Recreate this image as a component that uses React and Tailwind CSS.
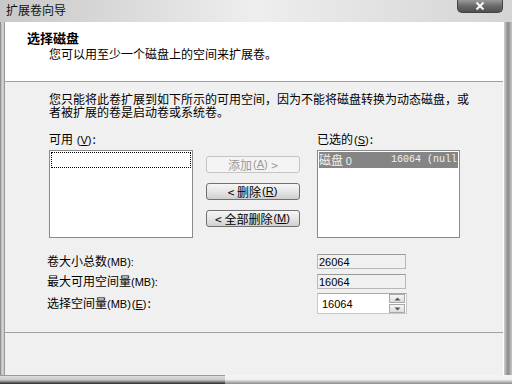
import React from 'react';

const cjk = "font-['Noto_Sans_CJK_SC',sans-serif]";
const num = "font-['Liberation_Sans',sans-serif]";
const mono = "font-['Liberation_Mono',monospace]";

function Btn({ children, disabled }) {
    return (
        <div
            className={`h-[17px] w-[94px] rounded-[3px] border flex items-center justify-center text-[12px] leading-none ${
                disabled
                    ? 'border-[#c4c4c4] bg-[#f4f4f4] text-[#9a9a9a]'
                    : 'border-[#707070] bg-linear-to-b from-[#f6f6f6] via-[#e6e6e6] to-[#cfcfcf] text-black'
            }`}
        >
            {children}
        </div>
    );
}

function Acc({ k }) {
    return (
        <span className={`${num} text-[11px] mx-[1px]`}>
            (<span className="underline">{k}</span>)
        </span>
    );
}

function ReadField({ value }) {
    return (
        <div className={`w-[89px] h-[15px] bg-[#f0f0f0] border border-[#b8b8b8] border-t-[#9a9a9a] flex items-center pl-[1px] ${num} text-[11px] text-black`}>
            {value}
        </div>
    );
}

export default function App() {
    return (
        <div className={`w-[512px] h-[384px] flex flex-col overflow-hidden bg-[#d0d0d0] ${cjk} text-black`}>
            {/* title bar */}
            <div className="h-[22px] flex items-start bg-linear-to-r from-[#c8c8c8] via-[#eeeeee] to-[#d4d4d4]">
                <span className="pl-[6px] pt-[2px] text-[12px] leading-[16px] text-[#111]">扩展卷向导</span>
                <div className="ml-auto mr-[9px] w-[46px] h-[13px] rounded-b-[5px] border border-t-0 border-[#444] bg-linear-to-b from-[#9a9a9a] via-[#6a6a6a] to-[#505050] flex items-center justify-center">
                    <svg width="10" height="8" viewBox="0 0 10 8">
                        <path d="M1.5 0.5 L8.5 7.5 M8.5 0.5 L1.5 7.5" stroke="#fff" strokeWidth="2" />
                    </svg>
                </div>
            </div>

            <div className="flex flex-1">
                <div className="w-[5px] bg-linear-to-r from-[#7a7a7a] via-[#d8d8d8] to-[#c4c4c4] border-r border-[#9a9a9a]" />

                <div className="flex-1 flex flex-col bg-[#f0f0f0]">
                    {/* header */}
                    <div className="h-[60px] bg-white border-b border-[#a0a0a0] pl-[22px] pt-[8px]">
                        <div className="text-[13px] font-bold leading-[16px]">选择磁盘</div>
                        <div className="pl-[22px] mt-[1px] text-[12px] leading-[14px]">您可以用至少一个磁盘上的空间来扩展卷。</div>
                    </div>

                    {/* body */}
                    <div className="flex-1 flex flex-col pt-[10px]">
                        <p className="ml-[44px] w-[424px] text-[12px] leading-[13px]">
                            您只能将此卷扩展到如下所示的可用空间，因为不能将磁盘转换为动态磁盘，或者被扩展的卷是启动卷或系统卷。
                        </p>

                        <div className="flex mt-[14px] text-[12px] leading-[14px]">
                            <span className="ml-[44px] w-[268px]">
                                可用 <Acc k="V" />:
                            </span>
                            <span>
                                已选的<Acc k="S" />:
                            </span>
                        </div>

                        <div className="flex mt-[3px]">
                            <div className="ml-[44px] w-[144px] h-[88px] bg-white border border-[#8a8a8a] p-[1px]">
                                <div className="h-[16px] border border-dotted border-black" />
                            </div>
                            <div className="ml-[13px] w-[94px] pt-[6px] flex flex-col gap-[10px]">
                                <Btn disabled>
                                    添加<Acc k="A" />&nbsp;&gt;
                                </Btn>
                                <Btn>
                                    &lt;&nbsp;删除<Acc k="R" />
                                </Btn>
                                <Btn>
                                    &lt;&nbsp;全部删除<Acc k="M" />
                                </Btn>
                            </div>
                            <div className="ml-[17px] w-[143px] h-[88px] bg-white border border-[#8a8a8a] p-[1px]">
                                <div className="h-[16px] bg-[#858585] text-[#f2f2f2] flex items-center whitespace-nowrap text-[12px] leading-none">
                                    <span className="w-[72px] shrink-0">
                                        磁盘 <span className={`${num} text-[11px]`}>0</span>
                                    </span>
                                    <span className={`${mono} text-[10px]`}>16064 (null</span>
                                </div>
                            </div>
                        </div>

                        <div className="flex flex-col mt-[16px] text-[12px] leading-[14px]">
                            <div className="flex items-center">
                                <span className="ml-[42px] w-[270px]">
                                    卷大小总数<span className={`${num} text-[11px]`}>(MB):</span>
                                </span>
                                <ReadField value="26064" />
                            </div>
                            <div className="flex items-center mt-[5px]">
                                <span className="ml-[42px] w-[270px]">
                                    最大可用空间量<span className={`${num} text-[11px]`}>(MB):</span>
                                </span>
                                <ReadField value="16064" />
                            </div>
                            <div className="flex items-center mt-[4px]">
                                <span className="ml-[42px] w-[270px]">
                                    选择空间量<span className={`${num} text-[11px]`}>(MB)</span>
                                    <Acc k="E" />:
                                </span>
                                <div className="w-[90px] h-[21px] bg-white border border-[#c8c8c8] border-t-[#a8a8a8] flex items-center">
                                    <span className={`flex-1 pl-[4px] ${num} text-[11px]`}>16064</span>
                                    <div className="w-[16px] h-[19px] flex flex-col gap-[1px] mr-[1px]">
                                        <div className="flex-1 border border-[#a8a8a8] bg-linear-to-b from-[#f6f6f6] to-[#dcdcdc] flex items-center justify-center">
                                            <svg width="7" height="4" viewBox="0 0 7 4">
                                                <path d="M0.5 3.5 L3.5 0.5 L6.5 3.5 Z" fill="#555" />
                                            </svg>
                                        </div>
                                        <div className="flex-1 border border-[#a8a8a8] bg-linear-to-b from-[#f6f6f6] to-[#dcdcdc] flex items-center justify-center">
                                            <svg width="7" height="4" viewBox="0 0 7 4">
                                                <path d="M0.5 0.5 L3.5 3.5 L6.5 0.5 Z" fill="#555" />
                                            </svg>
                                        </div>
                                    </div>
                                </div>
                            </div>
                        </div>
                    </div>

                    {/* footer */}
                    <div className="h-[43px] border-t border-[#a0a0a0] bg-[#f0f0f0]" />
                </div>

                <div className="w-[9px] border-l border-white bg-linear-to-r from-[#d0d0d0] via-[#8a8a8a] to-[#c8c8c8]" />
            </div>

            {/* bottom frame */}
            <div className="h-[9px] flex">
                <div className="w-[225px] border-t border-[#9a9a9a] bg-linear-to-b from-[#dcdcdc] via-[#c8c8c8] to-[#2a2a2a]" />
                <div className="flex-1 bg-linear-to-b from-[#f4f4f4] via-[#f0f0f0] to-[#8a8a8a]" />
            </div>
        </div>
    );
}
